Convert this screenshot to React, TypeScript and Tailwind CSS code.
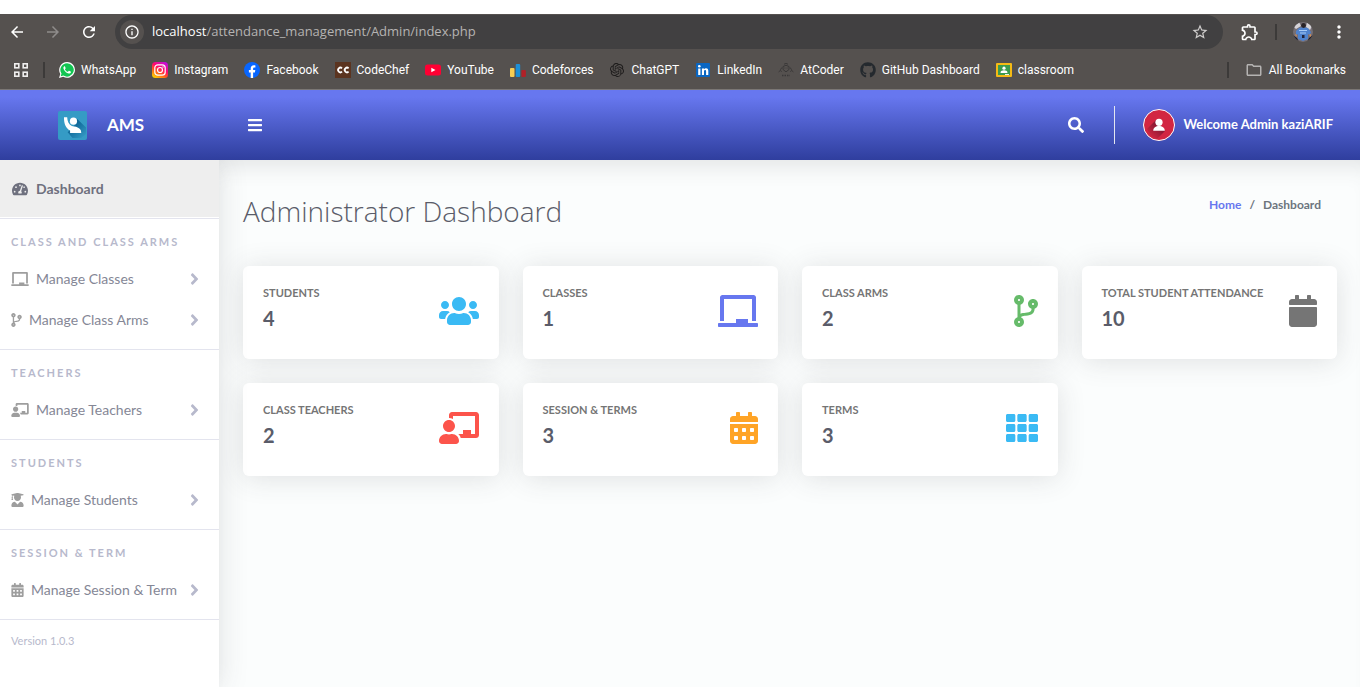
import type { ComponentType, ReactNode } from "react";
import {
  FaAngleRight,
  FaBars,
  FaCalendar,
  FaCalendarAlt,
  FaChalkboard,
  FaChalkboardTeacher,
  FaCodeBranch,
  FaGithub,
  FaSearch,
  FaTachometerAlt,
  FaTh,
  FaUserGraduate,
  FaUsers,
} from "react-icons/fa";
import {
  MdArrowBack,
  MdArrowForward,
  MdInfoOutline,
  MdMoreVert,
  MdOutlineExtension,
  MdOutlineFolder,
  MdRefresh,
  MdStarBorder,
} from "react-icons/md";
import { SiOpenai } from "react-icons/si";

type IconType = ComponentType<{ className?: string }>;

function WhatsAppIcon() {
  return (
    <svg viewBox="0 0 16 16" className="size-4">
      <path d="M8.100 0a7.900 7.900 0 0 0-6.800 11.900L0 16l4.200-1.200A7.900 7.900 0 1 0 8.100 0z" fill="#fff" />
      <path d="M8.100 1.200a6.700 6.700 0 0 0-5.600 10.400l-.8 2.700 2.700-.8A6.700 6.700 0 1 0 8.100 1.200z" fill="#12c552" />
      <path d="M5.700 4.200c-.5 0-1.400.6-1.300 1.800.1 1.800 2.700 5.200 5.400 5.600 1 .1 2-.6 2.100-1.300 0-.4 0-.6-.2-.7l-1.600-.8c-.2-.1-.4 0-.5.1l-.6.8c-.1.1-.3.2-.5.1-1-.4-2-1.300-2.500-2.300-.1-.2 0-.3.1-.4l.5-.7c.1-.1.100-.3 0-.4l-.6-1.500c-.1-.2-.2-.3-.3-.3z" fill="#fff" />
    </svg>
  );
}

function InstagramIcon() {
  return (
    <svg viewBox="0 0 16 16" className="size-4">
      <defs>
        <linearGradient id="ig" x1="0.2" y1="1" x2="0.8" y2="0">
          <stop offset="0" stopColor="#ffd000" />
          <stop offset="0.35" stopColor="#ff5a1f" />
          <stop offset="0.6" stopColor="#ff0a6c" />
          <stop offset="1" stopColor="#c20fe0" />
        </linearGradient>
      </defs>
      <rect width="16" height="16" rx="3.500" fill="url(#ig)" />
      <rect x="2.800" y="2.800" width="10.400" height="10.400" rx="3" fill="none" stroke="#fff" strokeWidth="1.200" />
      <circle cx="8" cy="8" r="2.500" fill="none" stroke="#fff" strokeWidth="1.200" />
      <circle cx="11" cy="5" r="0.700" fill="#fff" />
    </svg>
  );
}

function FacebookIcon() {
  return (
    <svg viewBox="0 0 16 16" className="size-4">
      <circle cx="8" cy="8" r="8" fill="#0866ff" />
      <path d="M6.700 15.900v-5.400H4.900V8h1.800V6.700c0-2.200 1-3.500 3.300-3.500.5 0 1.100.1 1.400.2v2.200h-.9c-1 0-1.400.4-1.400 1.300V8h2.200l-.4 2.500H9.100v5.400a8 8 0 0 1-2.400 0z" fill="#fff" />
    </svg>
  );
}

function CodeChefIcon() {
  return (
    <svg viewBox="0 0 16 16" className="size-4">
      <rect width="16" height="16" fill="#5b3420" />
      <g fill="none" stroke="#fff" strokeWidth="1.800">
        <path d="M7 6.300A2.300 2.300 0 1 0 7 9.700" />
        <path d="M13.600 6.300a2.300 2.300 0 1 0 0 3.400" />
      </g>
    </svg>
  );
}

function YouTubeIcon() {
  return (
    <svg viewBox="0 0 16 16" className="size-4">
      <rect y="2.500" width="16" height="11" rx="2.500" fill="#ff0033" />
      <path d="M6.300 5.700v4.600l4.200-2.300z" fill="#fff" />
    </svg>
  );
}

function CodeforcesIcon() {
  return (
    <svg viewBox="0 0 16 16" className="size-4">
      <rect y="6" width="4.500" height="9" rx="1" fill="#f8cd52" />
      <rect x="5.700" y="2" width="4.500" height="13" rx="1" fill="#1c8fd6" />
      <rect x="11.400" y="8" width="4.500" height="7" rx="1" fill="#b02128" />
    </svg>
  );
}

function LinkedInIcon() {
  return (
    <svg viewBox="0 0 16 16" className="size-4">
      <rect x="1" y="1" width="14" height="14" rx="1" fill="#0a66c2" />
      <g fill="#fff">
        <circle cx="4.300" cy="4.300" r="1.300" />
        <path d="M3.200 6.400h2.200V13H3.200zM6.900 6.400H9v.9c.4-.7 1.100-1.100 2-1.100 1.800 0 2.300 1.100 2.300 2.900V13h-2.200V9.600c0-.9-.2-1.500-1-1.500-.8 0-1.100.6-1.100 1.500V13H6.900z" />
      </g>
    </svg>
  );
}

function AtCoderIcon() {
  return (
    <svg viewBox="0 0 16 16" className="size-4" fill="none" stroke="#3a3838" strokeWidth="1">
      <path d="M5 4.500 8 3.300l3 1.200v3L8 9.900 5 7.500zM6.500 6h.8M8.700 6h.8M3.800 5.500 2.500 7.700M12.200 5.500l1.300 2.200M.6 9.900l1.900-1.600 1 1.500M15.400 9.900l-1.900-1.600-1 1.500M6 2.200l2-.8 2 .8" />
      <path d="M4 13.500h8" strokeDasharray="1.500 1" strokeWidth="1.500" />
    </svg>
  );
}

function ClassroomIcon() {
  return (
    <svg viewBox="0 0 16 16" className="size-4">
      <rect y="1" width="16" height="14" rx="1" fill="#f5ba15" />
      <rect x="2" y="3" width="12" height="10" fill="#3c9a4e" />
      <circle cx="8" cy="6.200" r="1.600" fill="#fff" />
      <path d="M4.600 11v-.8c0-1.200 1.800-1.900 3.400-1.900s3.400.7 3.400 1.900v.8z" fill="#fff" />
      <rect x="9" y="12" width="4" height="1" fill="#e8f3e8" />
    </svg>
  );
}

function AppsIcon() {
  return (
    <svg viewBox="0 0 14 14" className="size-3.5" fill="none" stroke="#efeeee" strokeWidth="1.600">
      <rect x="0.800" y="0.800" width="4" height="4" />
      <rect x="9.200" y="0.800" width="4" height="4" />
      <rect x="0.800" y="9.200" width="4" height="4" />
      <rect x="9.200" y="9.200" width="4" height="4" />
    </svg>
  );
}

function BrowserAvatar() {
  return (
    <svg viewBox="0 0 20 20" className="size-5">
      <defs>
        <clipPath id="round">
          <circle cx="10" cy="10" r="10" />
        </clipPath>
      </defs>
      <g clipPath="url(#round)">
        <rect width="20" height="20" fill="#777076" />
        <path d="M0 4 6 0l2 4-5 3zM14 0l5 4-2 4-4-3z" fill="#d6d3d8" />
        <path d="M0 13l4 3 2 4H2zM20 13l-4 3-2 4h5z" fill="#1c1d2c" />
        <path d="M3 9l3-3 4-1 5 1 3 4-1 3-2-1v5l-5 2-5-2v-5l-2 1z" fill="#4f83cf" />
        <circle cx="10.500" cy="3.500" r="2.400" fill="#292327" />
        <path d="M6 8.500h8M7 11h6" stroke="#a7cbf7" />
        <path d="M9 13h2.500v3H9z" fill="#20233b" />
        <path d="M16 13l2-1v3zM2 12l2 1-1 2z" fill="#d58c52" />
      </g>
    </svg>
  );
}

function AmsLogo() {
  return (
    <svg viewBox="0 0 30 30" className="size-[29px]">
      <defs>
        <linearGradient id="cast" x1="0.200" y1="0.200" x2="0.900" y2="1">
          <stop offset="0" stopColor="#065b8d" />
          <stop offset="1" stopColor="#359bc5" />
        </linearGradient>
      </defs>
      <rect width="30" height="30" rx="2" fill="#359bc5" />
      <path d="M19.500 8 29 17v7l-5 4H15l-5-6 8-8z" fill="url(#cast)" />
      <circle cx="16" cy="10.500" r="3.700" fill="#fff" />
      <path d="M6.200 6.500h3.300c.2 4 1.500 7.500 4.800 9 3 .5 9.700 1.200 9.700 6.500v.8H12.500v-2.500C8.500 18 6 14 6.200 6.500z" fill="#fff" />
    </svg>
  );
}

function AdminAvatar() {
  return (
    <svg viewBox="0 0 32 32" className="size-8">
      <defs>
        <linearGradient id="shade" x1="0.800" y1="0.200" x2="0.200" y2="0.900">
          <stop offset="0.300" stopColor="#8f1a35" />
          <stop offset="1" stopColor="#d22642" />
        </linearGradient>
      </defs>
      <circle cx="16" cy="16" r="15.500" fill="#d22642" />
      <path d="M13 11 4 20l4 7 6 3 8-8z" fill="url(#shade)" />
      <circle cx="16" cy="16" r="15.500" fill="none" stroke="#fff" />
      <circle cx="16" cy="13.300" r="3.600" fill="#fff" />
      <path d="M10.200 21.800c0-3 2.500-4.800 5.800-4.800s5.800 1.800 5.800 4.800z" fill="#fff" />
    </svg>
  );
}

const bookmarks: { label: string; icon: ReactNode }[] = [
  { label: "WhatsApp", icon: <WhatsAppIcon /> },
  { label: "Instagram", icon: <InstagramIcon /> },
  { label: "Facebook", icon: <FacebookIcon /> },
  { label: "CodeChef", icon: <CodeChefIcon /> },
  { label: "YouTube", icon: <YouTubeIcon /> },
  { label: "Codeforces", icon: <CodeforcesIcon /> },
  { label: "ChatGPT", icon: <SiOpenai className="mx-px size-3.5 text-[#1d1b1b]" /> },
  { label: "LinkedIn", icon: <LinkedInIcon /> },
  { label: "AtCoder", icon: <AtCoderIcon /> },
  { label: "GitHub Dashboard", icon: <FaGithub className="size-4 text-[#24292e]" /> },
  { label: "classroom", icon: <ClassroomIcon /> },
];

const sections: { title: string; items: { label: string; icon: IconType; width: string }[] }[] = [
  {
    title: "CLASS AND CLASS ARMS",
    items: [
      { label: "Manage Classes", icon: FaChalkboard, width: "w-[18px]" },
      { label: "Manage Class Arms", icon: FaCodeBranch, width: "w-[11px]" },
    ],
  },
  { title: "TEACHERS", items: [{ label: "Manage Teachers", icon: FaChalkboardTeacher, width: "w-[18px]" }] },
  { title: "STUDENTS", items: [{ label: "Manage Students", icon: FaUserGraduate, width: "w-[13px]" }] },
  { title: "SESSION & TERM", items: [{ label: "Manage Session & Term", icon: FaCalendarAlt, width: "w-[13px]" }] },
];

const stats: { label: string; value: number; icon: IconType; style: string }[] = [
  { label: "STUDENTS", value: 4, icon: FaUsers, style: "w-10 text-[#3abaf4]" },
  { label: "CLASSES", value: 1, icon: FaChalkboard, style: "w-10 text-[#6777ef]" },
  { label: "CLASS ARMS", value: 2, icon: FaCodeBranch, style: "w-6 text-[#66bb6a]" },
  { label: "TOTAL STUDENT ATTENDANCE", value: 10, icon: FaCalendar, style: "w-7 text-[#757575]" },
  { label: "CLASS TEACHERS", value: 2, icon: FaChalkboardTeacher, style: "w-10 text-[#fc544b]" },
  { label: "SESSION & TERMS", value: 3, icon: FaCalendarAlt, style: "w-7 text-[#ffa426]" },
  { label: "TERMS", value: 3, icon: FaTh, style: "w-8 text-[#3abaf4]" },
];

function BrowserBar() {
  return (
    <div className="border-b border-[#7b7775] bg-[#55514f] text-white">
      <div className="flex h-9 items-center pr-[11px] pl-2">
        <button aria-label="Back" className="mr-[18px]">
          <MdArrowBack className="size-[18px]" />
        </button>
        <button aria-label="Forward" className="mr-[18px] text-[#8f8c8b]">
          <MdArrowForward className="size-[18px]" />
        </button>
        <button aria-label="Reload" className="mr-[17px]">
          <MdRefresh className="size-[18px]" />
        </button>
        <div className="flex h-[34px] flex-1 items-center rounded-full bg-[#414041] pr-3.5 pl-[5px]">
          <button aria-label="Site information" className="mr-2 grid size-6 place-items-center rounded-full bg-[#55514f]">
            <MdInfoOutline className="size-4" />
          </button>
          <p className="flex-1 font-['Open_Sans',sans-serif] text-[13px] text-[#b5b3b2]">
            <span className="text-white">localhost</span>/attendance_management/Admin/index.php
          </p>
          <button aria-label="Bookmark this page" className="text-[#cfcdcc]">
            <MdStarBorder className="size-[18px]" />
          </button>
        </div>
        <button aria-label="Extensions" className="ml-[17px]">
          <MdOutlineExtension className="size-5" />
        </button>
        <span className="ml-[15px] h-4 w-0.5 bg-[#3c3a39]" />
        <button aria-label="Profile" className="ml-4">
          <BrowserAvatar />
        </button>
        <button aria-label="Menu" className="ml-4">
          <MdMoreVert className="size-5" />
        </button>
      </div>
      <div className="flex h-[39px] items-center px-3.5 font-[Roboto,sans-serif] text-xs">
        <button aria-label="Apps">
          <AppsIcon />
        </button>
        <span className="mr-3.5 ml-[15px] h-4 w-0.5 bg-[#3c3a39]" />
        <nav aria-label="Bookmarks" className="flex flex-1 gap-4">
          {bookmarks.map((b) => (
            <a key={b.label} href="#" className="flex items-center gap-1.5 whitespace-nowrap">
              {b.icon}
              {b.label}
            </a>
          ))}
        </nav>
        <span className="mr-4 h-4 w-0.5 bg-[#3c3a39]" />
        <button className="flex items-center gap-1.5">
          <MdOutlineFolder className="size-[18px] text-[#b5b3b2]" />
          All Bookmarks
        </button>
      </div>
    </div>
  );
}

function Header() {
  return (
    <header className="relative flex h-[70px] items-center bg-linear-to-b from-[#6777ef] from-10% to-[#2f3e9e] text-white">
      <a href="#" className="flex w-[219px] items-center gap-5 pl-[58px]">
        <AmsLogo />
        <span className="text-[17px] font-bold">AMS</span>
      </a>
      <button aria-label="Toggle sidebar" className="ml-7">
        <FaBars className="size-4" />
      </button>
      <div className="ml-auto flex items-center pr-[27px]">
        <button aria-label="Search">
          <FaSearch className="size-4" />
        </button>
        <span className="mr-7 ml-[30px] h-[38px] w-px bg-[#e3e6f0]" />
        <button className="flex items-center gap-2">
          <AdminAvatar />
          <span className="text-[13px] font-bold">Welcome Admin kaziARIF</span>
        </button>
      </div>
    </header>
  );
}

function Sidebar() {
  return (
    <aside className="relative w-[219px] shrink-0 bg-white shadow-[0_2px_28px_rgba(58,59,69,0.15)]">
      <nav aria-label="Main">
        <a href="#" className="mb-px flex h-[57px] items-center gap-2 bg-[#eee] pl-3 text-sm font-bold text-[#6e707e]">
          <FaTachometerAlt className="size-4" />
          Dashboard
        </a>
        {sections.map((s) => (
          <section key={s.title} className="border-t border-[#e3e4ee] pt-4 pb-[9px]">
            <h2 className="mb-[9px] pl-[11px] text-[11px] leading-[14px] font-bold tracking-[2px] text-[#b7b9cc]">
              {s.title}
            </h2>
            {s.items.map(({ label, icon: Icon, width }) => (
              <a key={label} href="#" className="flex h-[41px] items-center gap-[7px] pr-5 pl-[11px] text-sm text-[#858796]">
                <Icon className={`h-3.5 text-[#9e9e9e] ${width}`} />
                <span className="flex-1 whitespace-nowrap">{label}</span>
                <FaAngleRight className="h-[18px] w-[9px] text-[#b7b9cc]" />
              </a>
            ))}
          </section>
        ))}
      </nav>
      <p className="border-t border-[#e3e4ee] pt-3.5 pl-[11px] text-[11px] leading-[14px] text-[#b7b9cc]">Version 1.0.3</p>
    </aside>
  );
}

function StatCard({ label, value, icon: Icon, style }: (typeof stats)[number]) {
  return (
    <article className="flex items-center justify-between rounded-md bg-white p-5 shadow-[0_2px_28px_rgba(58,59,69,0.15)]">
      <div className="pb-2">
        <h2 className="mb-[5px] text-[11px] leading-[14px] font-bold whitespace-nowrap text-[#757575]">{label}</h2>
        <p className="text-xl leading-[26px] font-bold text-[#5a5c69]">{value}</p>
      </div>
      <Icon className={`mb-1 h-8 ${style}`} />
    </article>
  );
}

export default function App() {
  return (
    <div className="flex min-h-screen flex-col bg-[#fbfdfd] font-[Lato,sans-serif]">
      <div className="h-3.5 bg-white" />
      <BrowserBar />
      <Header />
      <div className="flex flex-1 overflow-hidden">
        <Sidebar />
        <main className="flex-1 pt-8 pr-[23px] pl-6 shadow-[inset_0_22px_22px_-16px_rgba(58,59,69,0.13)]">
          <div className="mb-9 flex items-start justify-between">
            <h1 className="font-['Open_Sans',sans-serif] text-[28px] leading-[38px] font-light text-[#5a5c69]">
              Administrator Dashboard
            </h1>
            <nav aria-label="Breadcrumb" className="flex gap-2 pt-1 pr-4 text-xs leading-[18px] font-bold text-[#6c757d]">
              <a href="#" className="text-[#6777ef]">Home</a>
              <span>/</span>
              <span>Dashboard</span>
            </nav>
          </div>
          <div className="grid grid-cols-4 gap-6">
            {stats.map((s) => (
              <StatCard key={s.label} {...s} />
            ))}
          </div>
        </main>
      </div>
    </div>
  );
}
